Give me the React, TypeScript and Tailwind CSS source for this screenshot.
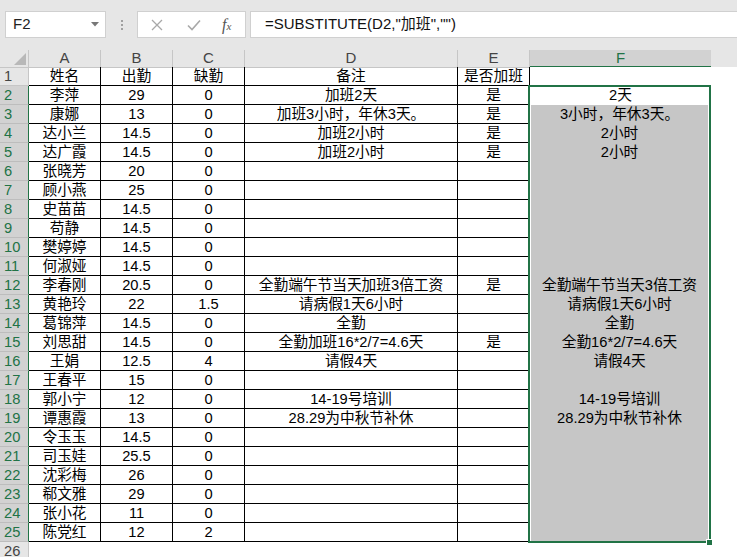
import React from 'react';

type Row = [string, string, string, string, string, string];

const rows: Row[] = [
  ['姓名', '出勤', '缺勤', '备注', '是否加班', ''],
  ['李萍', '29', '0', '加班2天', '是', '2天'],
  ['康娜', '13', '0', '加班3小时，年休3天。', '是', '3小时，年休3天。'],
  ['达小兰', '14.5', '0', '加班2小时', '是', '2小时'],
  ['达广霞', '14.5', '0', '加班2小时', '是', '2小时'],
  ['张晓芳', '20', '0', '', '', ''],
  ['顾小燕', '25', '0', '', '', ''],
  ['史苗苗', '14.5', '0', '', '', ''],
  ['苟静', '14.5', '0', '', '', ''],
  ['樊婷婷', '14.5', '0', '', '', ''],
  ['何淑娅', '14.5', '0', '', '', ''],
  ['李春刚', '20.5', '0', '全勤端午节当天加班3倍工资', '是', '全勤端午节当天3倍工资'],
  ['黄艳玲', '22', '1.5', '请病假1天6小时', '', '请病假1天6小时'],
  ['葛锦萍', '14.5', '0', '全勤', '', '全勤'],
  ['刘思甜', '14.5', '0', '全勤加班16*2/7=4.6天', '是', '全勤16*2/7=4.6天'],
  ['王娟', '12.5', '4', '请假4天', '', '请假4天'],
  ['王春平', '15', '0', '', '', ''],
  ['郭小宁', '12', '0', '14-19号培训', '', '14-19号培训'],
  ['谭惠霞', '13', '0', '28.29为中秋节补休', '', '28.29为中秋节补休'],
  ['令玉玉', '14.5', '0', '', '', ''],
  ['司玉娃', '25.5', '0', '', '', ''],
  ['沈彩梅', '26', '0', '', '', ''],
  ['郗文雅', '29', '0', '', '', ''],
  ['张小花', '11', '0', '', '', ''],
  ['陈党红', '12', '2', '', '', ''],
];

const font = { fontFamily: '"Liberation Sans", "Noto Sans CJK SC", sans-serif' };

const FormulaBar = () => (
  <div className="relative h-[50px] bg-[#e6e6e6]">
    <div className="flex h-[27px] pt-0 translate-y-[11px]">
      <div className="ml-[5px] flex w-[101px] items-center justify-between border border-[#d0d0d0] bg-white pl-[7px] pr-[6px] text-[15px] text-[#222]">
        <span>F2</span>
        <svg width="8" height="5" viewBox="0 0 8 5"><path d="M0 0h8L4 4.5z" fill="#777" /></svg>
      </div>
      <div className="flex w-[31px] flex-col items-center justify-center gap-[2px]">
        <span className="h-[2px] w-[2px] bg-[#a0a0a0]" />
        <span className="h-[2px] w-[2px] bg-[#a0a0a0]" />
        <span className="h-[2px] w-[2px] bg-[#a0a0a0]" />
      </div>
      <div className="flex w-[109px] items-center border border-[#d0d0d0] bg-white">
        <svg className="ml-[13px]" width="12" height="12" viewBox="0 0 12 12">
          <path d="M1 1l10 10M11 1L1 11" stroke="#a8a8a8" strokeWidth="1.3" />
        </svg>
        <svg className="ml-[24px]" width="14" height="12" viewBox="0 0 14 12">
          <path d="M1 6.5l4 4L13 1.5" stroke="#a8a8a8" strokeWidth="1.6" fill="none" />
        </svg>
        <span
          className="ml-[21px] italic text-[#555]"
          style={{ fontFamily: '"Liberation Serif", serif' }}
        >
          <span className="text-[16px]">f</span>
          <span className="text-[11px]">x</span>
        </span>
      </div>
      <div className="ml-[4px] flex flex-1 items-center border border-r-0 border-[#d0d0d0] bg-white pl-[14px] text-[15px] text-[#111]">
        =SUBSTITUTE(D2,"加班","")
      </div>
    </div>
  </div>
);

const grid = 'grid grid-cols-[29px_72px_72px_72px_213px_72px_181px_1fr]';

const ColumnHeaders = () => (
  <div className={`${grid} h-[17px] text-[15px] leading-[16px] text-[#444]`}>
    <div className="relative border-r border-b border-[#c6c6c6] bg-[#e6e6e6]">
      <svg className="absolute right-[2px] bottom-[2px]" width="12" height="12" viewBox="0 0 12 12">
        <path d="M12 0v12H0z" fill="#b8b8b8" />
      </svg>
    </div>
    {['A', 'B', 'C', 'D', 'E'].map((c) => (
      <div key={c} className="border-r border-b border-[#c6c6c6] bg-[#e6e6e6] text-center">
        {c}
      </div>
    ))}
    <div className="border-b-2 border-[#217346] bg-[#d2d2d2] text-center text-[#217346]">F</div>
    <div className="border-b border-[#c6c6c6] bg-[#e6e6e6]" />
  </div>
);

const SheetRow = ({ row, n }: { row: Row; n: number }) => {
  const selected = n >= 2 && n <= 25;
  return (
    <div className={`${grid} h-[19px] text-[14.7px] leading-[18px] text-black`}>
      <div
        className={
          selected
            ? 'border-r border-b border-r-[#217346] border-b-[#bdbdbd] bg-[#d2d2d2] pl-[4px] text-[#217346]'
            : 'border-r border-b border-[#c6c6c6] bg-[#e6e6e6] pl-[4px] text-[#444]'
        }
      >
        {n}
      </div>
      {row.slice(0, 5).map((v, i) => (
        <div key={i} className="overflow-visible whitespace-nowrap border-r border-b border-black text-center">
          {v}
        </div>
      ))}
      {n === 1 || n === 2 ? (
        <div className="whitespace-nowrap bg-white text-center">{row[5]}</div>
      ) : (
        <div className={`ml-[1px] mr-[3px] whitespace-nowrap bg-[#c6c6c6] text-center ${n === 25 ? 'mb-[1px]' : ''}`}>
          {row[5]}
        </div>
      )}
      <div className="bg-white" />
    </div>
  );
};

export default function App() {
  return (
    <div className="relative h-[557px] w-[737px] overflow-hidden bg-white" style={font}>
      <FormulaBar />
      <ColumnHeaders />
      {rows.map((r, i) => (
        <SheetRow key={i} row={r} n={i + 1} />
      ))}
      <div className={`${grid} h-[19px] text-[14.7px] leading-[18px]`}>
        <div className="border-r border-[#c6c6c6] bg-[#e6e6e6] pl-[4px] text-[#444]">26</div>
      </div>
      {/* selection frame over F2:F25 */}
      <div className="pointer-events-none absolute left-[528px] top-[85px] h-[458px] w-[183px] border-2 border-[#217346]" />
      <div className="absolute left-[706px] top-[539px] h-[6px] w-[6px] border-l border-t border-white bg-[#217346]" />
    </div>
  );
}
